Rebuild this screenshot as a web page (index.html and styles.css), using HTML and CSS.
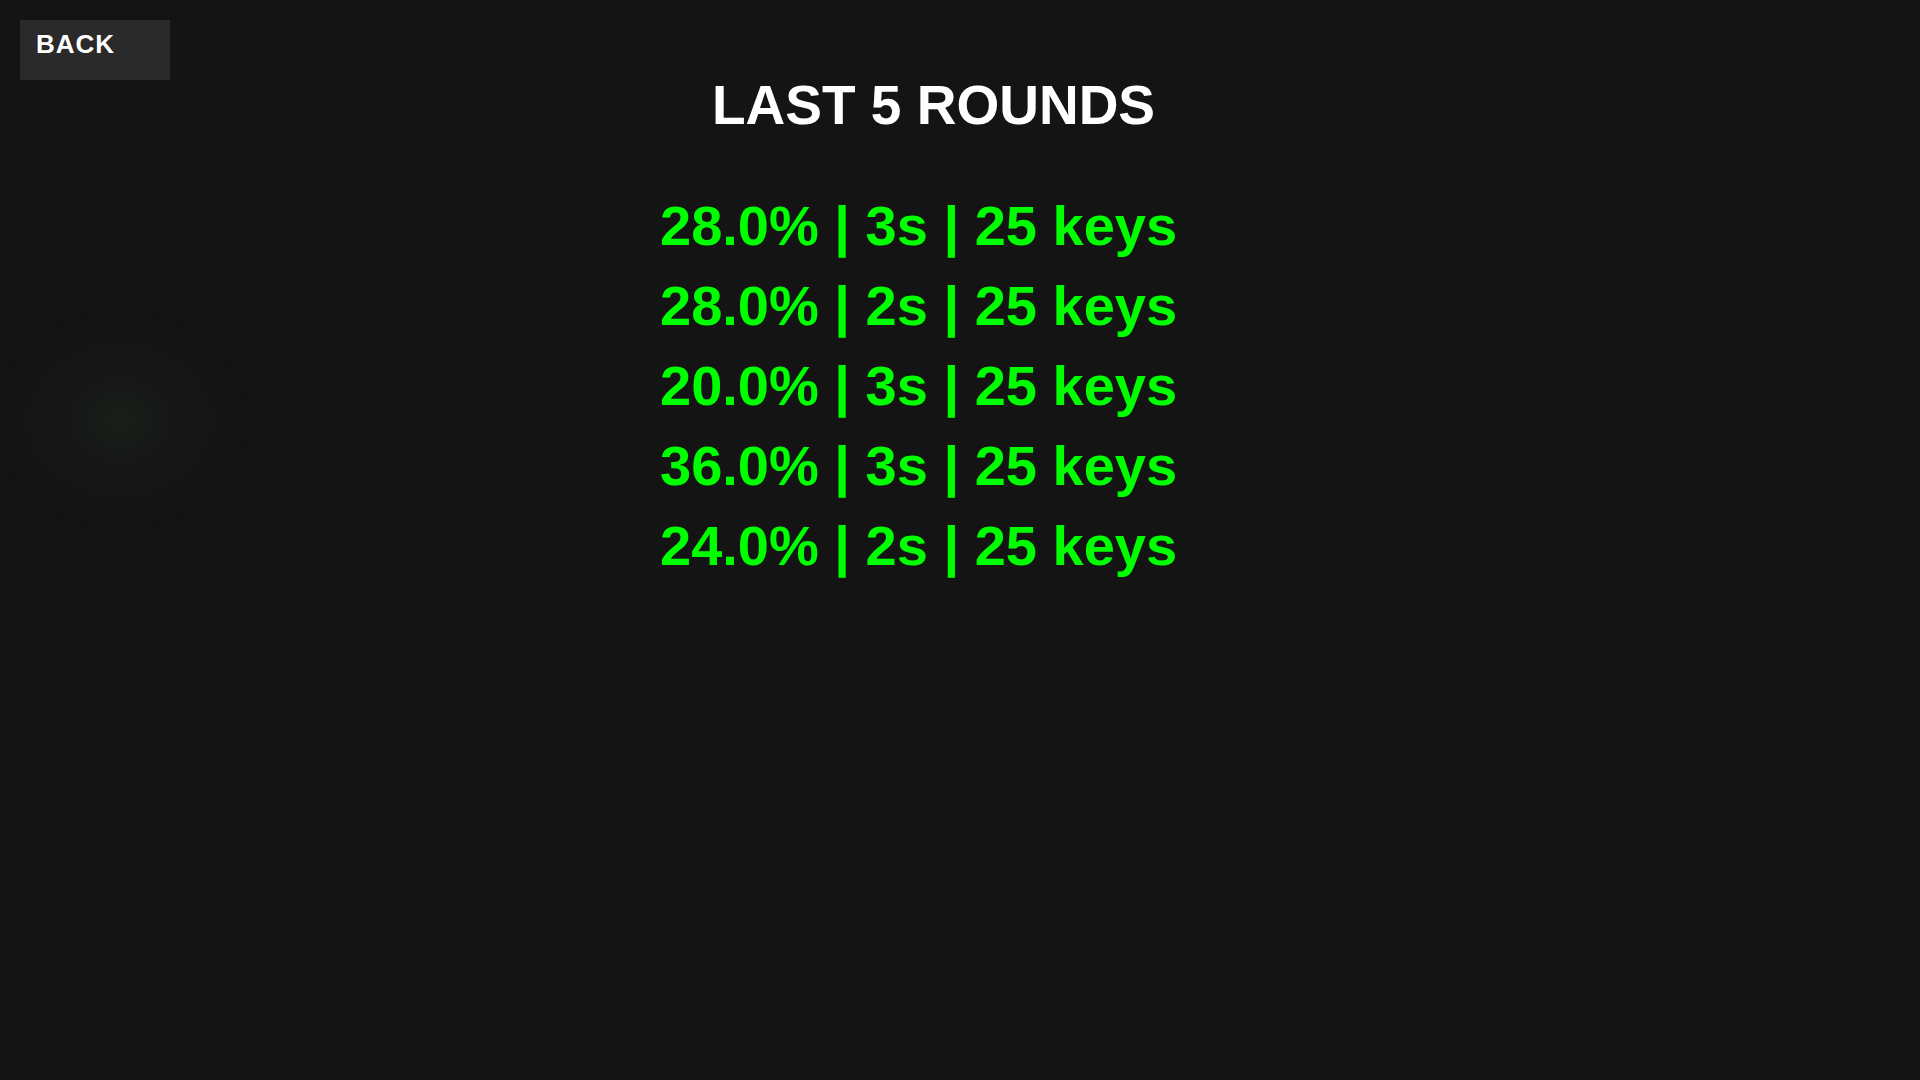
FILE: index.html
```html
<!DOCTYPE html>
<html lang="en">
<head>
<meta charset="UTF-8">
<title>Last 5 Rounds</title>
<link rel="stylesheet" href="styles.css">
</head>
<body>
    <button class="back-btn">BACK</button>
    <div class="glow"></div>

    <div id="history">
        <h1 class="title">LAST 5 ROUNDS</h1>
        <div class="rounds">
            <div class="round">28.0% | 3s | 25 keys</div>
            <div class="round">28.0% | 2s | 25 keys</div>
            <div class="round">20.0% | 3s | 25 keys</div>
            <div class="round">36.0% | 3s | 25 keys</div>
            <div class="round">24.0% | 2s | 25 keys</div>
        </div>
    </div>
</body>
</html>
```

FILE: styles.css
```css
body {
    font-family: 'Liberation Sans', Arial, sans-serif;
    background-color: #141414;
    margin: 0;
    padding: 0;
    min-height: 1080px;
    position: relative;
    overflow: hidden;
}

.back-btn {
    position: absolute;
    top: 20px;
    left: 20px;
    width: 150px;
    height: 60px;
    box-sizing: border-box;
    padding: 0 16px 12px;
    border: none;
    background-color: #2a2a2a;
    color: #ffffff;
    font-family: inherit;
    font-size: 26px;
    font-weight: bold;
    letter-spacing: 1px;
    text-align: left;
    cursor: pointer;
    z-index: 2;
}

.back-btn:hover {
    background-color: #333;
}

.glow {
    position: absolute;
    top: 320px;
    left: 0;
    width: 240px;
    height: 200px;
    background: radial-gradient(closest-side, rgba(30, 40, 30, 0.6) 0%, rgba(24, 28, 24, 0.4) 50%, rgba(20, 20, 20, 0) 100%);
    filter: blur(10px);
    z-index: 0;
}

#history {
    display: flex;
    flex-direction: column;
    align-items: center;
    padding: 73px 53px 0 0;
    position: relative;
    z-index: 1;
}

.title {
    margin: 0;
    color: #ffffff;
    font-size: 55px;
    font-weight: bold;
    line-height: normal;
}

.rounds {
    width: 547px;
    margin-top: 49px;
}

.round {
    color: #00ff00;
    font-size: 56px;
    font-weight: bold;
    line-height: 80px;
    white-space: nowrap;
}
```
